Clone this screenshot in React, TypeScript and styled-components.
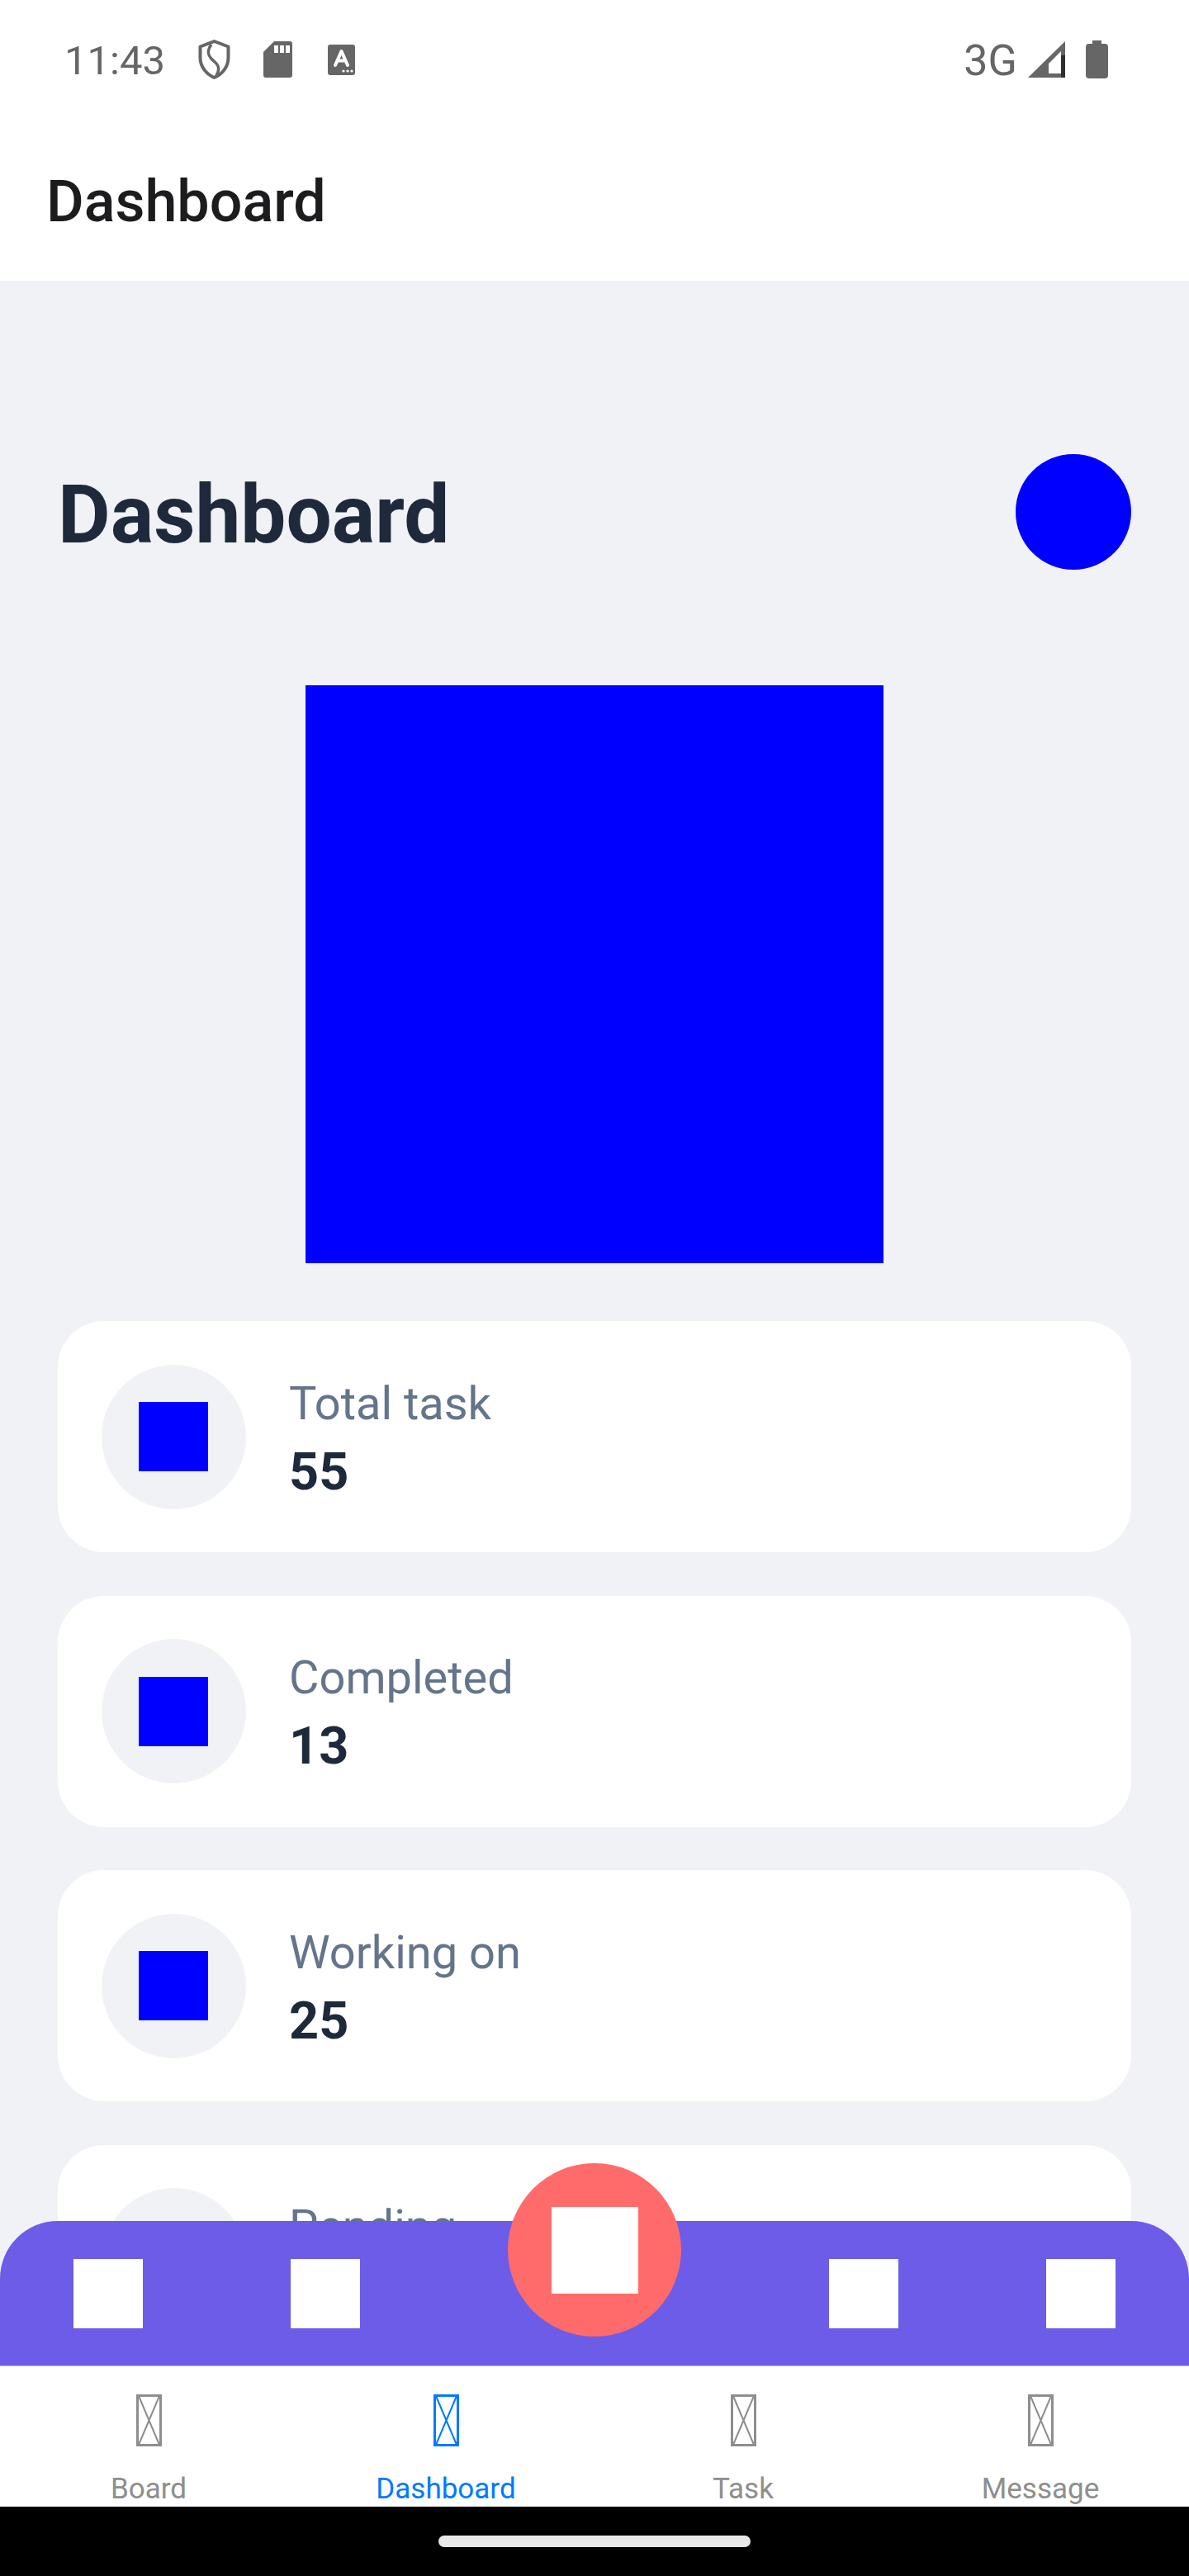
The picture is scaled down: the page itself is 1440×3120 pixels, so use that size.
import React from "react";
import styled, {createGlobalStyle} from "styled-components";

const stats = [
  {label: "Total task", value: 55},
  {label: "Completed", value: 13},
  {label: "Working on", value: 25},
  {label: "Pending", value: 17},
];

const tabs = ["Board", "Dashboard", "Task", "Message"];

const App: React.FC = () => {
  return (
    <Screen>
      <GlobalStyle />
      <StatusBar>
        <StatusGroup>
          <Time>11:43</Time>
          <ShieldIcon />
          <SdIcon />
          <SimIcon />
        </StatusGroup>
        <StatusGroup>
          <Network>3G</Network>
          <SignalIcon />
          <BatteryIcon />
        </StatusGroup>
      </StatusBar>
      <Header>
        <HeaderTitle>Dashboard</HeaderTitle>
      </Header>

      <Main>
        <TitleRow>
          <PageTitle>Dashboard</PageTitle>
          <Avatar />
        </TitleRow>
        <Hero />
        <CardList>
          {stats.map((stat) => (
            <Card key={stat.label}>
              <IconCircle>
                <IconSquare />
              </IconCircle>
              <CardText>
                <CardLabel>{stat.label}</CardLabel>
                <CardValue>{stat.value}</CardValue>
              </CardText>
            </Card>
          ))}
        </CardList>

        <ActionBar>
          <ActionGroup>
            <ActionIcon />
            <ActionIcon />
          </ActionGroup>
          <ActionGroup>
            <ActionIcon />
            <ActionIcon />
          </ActionGroup>
          <Fab>
            <FabIcon />
          </Fab>
        </ActionBar>
      </Main>

      <TabBar>
        {tabs.map((tab) => (
          <Tab key={tab}>
            <MissingIcon $active={tab === "Dashboard"} />
            <TabLabel $active={tab === "Dashboard"}>{tab}</TabLabel>
          </Tab>
        ))}
      </TabBar>
      <NavBar>
        <HomePill />
      </NavBar>
    </Screen>
  );
};

const ShieldIcon = () => (
  <ShieldSvg viewBox="0 0 39 48">
    <path
      d="M19.5 2 L36.5 8.5 V22 C36.5 33 29 42 19.5 46 C10 42 2.5 33 2.5 22 V8.5 Z"
      fill="none"
      stroke="#666"
      strokeWidth="4"
      strokeLinejoin="round"
    />
    <path
      d="M16 6 C9 15 13 21 19 26 C25 31 27 36 21 45"
      fill="none"
      stroke="#666"
      strokeWidth="3.5"
    />
  </ShieldSvg>
);

const SdIcon = () => (
  <SdSvg viewBox="0 0 35 44">
    <path
      d="M13 0 H32 Q35 0 35 3 V41 Q35 44 32 44 H3 Q0 44 0 41 V13 Z"
      fill="#666"
    />
    <rect x="13" y="5" width="5" height="9" fill="#fff" />
    <rect x="20" y="5" width="5" height="9" fill="#fff" />
    <rect x="27" y="5" width="5" height="9" fill="#fff" />
  </SdSvg>
);

const SimIcon = () => (
  <SimSvg viewBox="0 0 33 37">
    <rect width="33" height="37" rx="3" fill="#666" />
    <path
      d="M9 25 L16.5 8 L24 25 M11.5 19.5 H21.5"
      fill="none"
      stroke="#fff"
      strokeWidth="4"
      strokeLinecap="round"
      strokeLinejoin="round"
    />
    <circle cx="19" cy="32" r="1.6" fill="#fff" />
    <circle cx="24" cy="32" r="1.6" fill="#fff" />
    <circle cx="29" cy="32" r="1.6" fill="#fff" />
  </SimSvg>
);

const SignalIcon = () => (
  <SignalSvg viewBox="0 0 45 44">
    <path d="M45 0 V44 H0 Z M25 39 H40 V12 L25 27 Z" fill="#666" fillRule="evenodd" />
    <rect x="40" y="17" width="5" height="27" fill="#222" opacity="0.8" />
  </SignalSvg>
);

const BatteryIcon = () => (
  <BatterySvg viewBox="0 0 27 46">
    <path d="M8 0 H19 V4 H23 Q27 4 27 8 V42 Q27 46 23 46 H4 Q0 46 0 42 V8 Q0 4 4 4 H8 Z" fill="#666" />
  </BatterySvg>
);

const MissingIcon: React.FC<{$active: boolean}> = ({$active}) => (
  <TofuSvg viewBox="0 0 31 63">
    <g fill="none" stroke={$active ? "#007aff" : "#8e8e8f"} strokeWidth="2">
      <rect x="1.5" y="1.5" width="28" height="60" strokeWidth="3" />
      <path d="M3 2 L28 61 M28 2 L3 61" />
    </g>
  </TofuSvg>
);

const GlobalStyle = createGlobalStyle`
  html, body {
    margin: 0;
    padding: 0;
    background: #fff;
  }
  * {
    box-sizing: border-box;
  }
`;

const Screen = styled.div`
  display: flex;
  flex-direction: column;
  width: 1440px;
  height: 3120px;
  overflow: hidden;
  background: #fff;
  font-family: Roboto, "Liberation Sans", sans-serif;
`;

const StatusBar = styled.div`
  display: flex;
  justify-content: space-between;
  align-items: center;
  height: 144px;
  padding: 0 98px 0 78px;
  flex-shrink: 0;
`;

const StatusGroup = styled.div`
  display: flex;
  align-items: center;
`;

const Time = styled.span`
  padding-top: 2px;
  font-size: 49px;
  color: #666;
  margin-right: 40px;
`;

const ShieldSvg = styled.svg`
  width: 39px;
  height: 48px;
  margin-right: 40px;
`;

const SdSvg = styled.svg`
  width: 35px;
  height: 44px;
  margin-right: 43px;
`;

const SimSvg = styled.svg`
  width: 33px;
  height: 37px;
`;

const Network = styled.span`
  padding-top: 2px;
  font-size: 52px;
  color: #666;
  margin-right: 13px;
`;

const SignalSvg = styled.svg`
  width: 45px;
  height: 44px;
  margin-right: 25px;
`;

const BatterySvg = styled.svg`
  width: 27px;
  height: 46px;
`;

const Header = styled.header`
  display: flex;
  align-items: center;
  height: 196px;
  padding: 4px 0 0 56px;
  flex-shrink: 0;
  background: #fff;
`;

const HeaderTitle = styled.h1`
  margin: 0;
  font-size: 70px;
  font-weight: 500;
  color: #1c1c1e;
`;

const Main = styled.main`
  position: relative;
  flex: 1;
  min-height: 0;
  overflow: hidden;
  padding: 210px 70px 0;
  background: #f1f2f6;
`;

const TitleRow = styled.div`
  display: flex;
  justify-content: space-between;
  align-items: center;
  height: 140px;
`;

const PageTitle = styled.h2`
  margin: 0;
  padding-top: 6px;
  font-size: 98px;
  font-weight: 700;
  color: #1e293b;
`;

const Avatar = styled.div`
  width: 140px;
  height: 140px;
  border-radius: 50%;
  background: #0000ff;
`;

const Hero = styled.div`
  width: 700px;
  height: 700px;
  margin: 140px auto 70px;
  background: #0000ff;
`;

const CardList = styled.div`
  display: flex;
  flex-direction: column;
  gap: 52.5px;
`;

const Card = styled.div`
  display: flex;
  align-items: center;
  gap: 52.5px;
  height: 280px;
  flex-shrink: 0;
  padding: 0 52.5px;
  border-radius: 56px;
  background: #fff;
`;

const IconCircle = styled.div`
  display: flex;
  justify-content: center;
  align-items: center;
  width: 175px;
  height: 175px;
  border-radius: 50%;
  background: #f1f2f6;
`;

const IconSquare = styled.div`
  width: 84px;
  height: 84px;
  background: #0000ff;
`;

const CardText = styled.div`
  display: flex;
  flex-direction: column;
  gap: 11px;
  padding-top: 8px;
`;

const CardLabel = styled.span`
  font-size: 56px;
  line-height: 66px;
  color: #64748b;
`;

const CardValue = styled.span`
  font-size: 63px;
  line-height: 78px;
  font-weight: 700;
  color: #1e293b;
`;

const ActionBar = styled.div`
  position: absolute;
  left: 0;
  right: 0;
  bottom: 0;
  display: flex;
  justify-content: space-between;
  height: 175px;
  padding: 46px 89px 0;
  border-radius: 70px 70px 0 0;
  background: #6c5ce7;
`;

const ActionGroup = styled.div`
  display: flex;
  gap: 179px;
`;

const ActionIcon = styled.div`
  width: 84px;
  height: 84px;
  background: #fff;
`;

const Fab = styled.div`
  position: absolute;
  left: 615px;
  top: -70px;
  display: flex;
  justify-content: center;
  align-items: center;
  width: 210px;
  height: 210px;
  border-radius: 50%;
  background: #ff6b6b;
`;

const FabIcon = styled.div`
  width: 105px;
  height: 105px;
  background: #fff;
`;

const TabBar = styled.nav`
  display: grid;
  grid-template-columns: repeat(4, 1fr);
  height: 171px;
  flex-shrink: 0;
  border-top: 1px solid #b4acf2;
  background: #fff;
`;

const Tab = styled.div`
  display: flex;
  flex-direction: column;
  align-items: center;
  padding-top: 34px;
`;

const TofuSvg = styled.svg`
  width: 31px;
  height: 63px;
`;

const TabLabel = styled.span<{$active: boolean}>`
  margin-top: 31px;
  font-size: 35px;
  line-height: 41px;
  color: ${({$active}) => ($active ? "#007aff" : "#8e8e8f")};
`;

const NavBar = styled.div`
  display: flex;
  justify-content: center;
  height: 84px;
  flex-shrink: 0;
  padding-top: 35px;
  background: #000;
`;

const HomePill = styled.div`
  width: 378px;
  height: 14px;
  border-radius: 7px;
  background: #e8e8e8;
`;

export default App;
